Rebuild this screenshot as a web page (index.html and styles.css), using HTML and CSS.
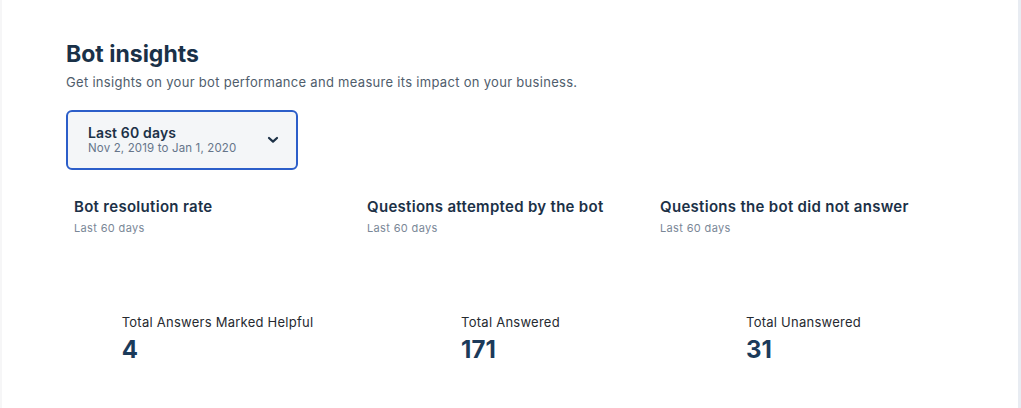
FILE: index.html
```html
<!DOCTYPE html>
<html lang="en">
<head>
<meta charset="utf-8">
<title>Bot insights</title>
<link rel="stylesheet" href="styles.css">
</head>
<body>
<div class="frame">
  <main class="page">
    <header class="header">
      <h1 class="title">Bot insights</h1>
      <p class="subtitle">Get insights on your bot performance and measure its impact on your business.</p>
    </header>
    <button class="range" type="button">
      <span class="range-text">
        <span class="range-label">Last 60 days</span>
        <span class="range-dates">Nov 2, 2019 to Jan 1, 2020</span>
      </span>
      <svg class="chevron" width="12" height="8" viewBox="0 0 12 8" aria-hidden="true"><path d="M2 2l4 3.6L10 2" fill="none" stroke="#1c3147" stroke-width="2.2" stroke-linecap="round" stroke-linejoin="round"/></svg>
    </button>
    <section class="cards">
      <div class="card">
        <h2 class="card-title">Bot resolution rate</h2>
        <p class="card-sub">Last 60 days</p>
      </div>
      <div class="card">
        <h2 class="card-title">Questions attempted by the bot</h2>
        <p class="card-sub">Last 60 days</p>
      </div>
      <div class="card">
        <h2 class="card-title">Questions the bot did not answer</h2>
        <p class="card-sub">Last 60 days</p>
      </div>
    </section>
    <section class="stats">
      <div class="stat-col"><div class="stat"><div class="stat-label">Total Answers Marked Helpful</div><div class="stat-value">4</div></div></div>
      <div class="stat-col"><div class="stat"><div class="stat-label">Total Answered</div><div class="stat-value">171</div></div></div>
      <div class="stat-col"><div class="stat"><div class="stat-label">Total Unanswered</div><div class="stat-value">31</div></div></div>
    </section>
  </main>
  <aside class="rail"></aside>
</div>
</body>
</html>
```

FILE: styles.css
```css
* { box-sizing: border-box; }
html, body { margin: 0; padding: 0; }
body {
  font-family: Inter, "Noto Sans", "Liberation Sans", sans-serif;
  background: #ffffff;
  color: #1c3147;
}
.frame {
  display: flex;
  min-height: 408px;
  border-left: 2px solid #f6f6f7;
}
.page {
  flex: 1;
  padding: 39px 0 0 64px;
}
.rail {
  width: 3px;
  background: #e8ecf2;
}
.title {
  margin: 0;
  font-size: 23px;
  line-height: 30px;
  font-weight: 700;
  color: #1a3148;
}
.subtitle {
  margin: 4px 0 0;
  font-size: 13px;
  line-height: 18px;
  letter-spacing: 0.3px;
  color: #4f5d6c;
}
.range {
  margin-top: 19px;
  width: 232px;
  height: 60px;
  display: flex;
  align-items: center;
  justify-content: space-between;
  padding: 0 17px 0 20px;
  border: 2px solid #2c5ec9;
  border-radius: 6px;
  background: #f4f6f8;
  font-family: inherit;
  text-align: left;
  cursor: pointer;
}
.range-text { display: flex; flex-direction: column; }
.range-label {
  font-size: 14px;
  line-height: 17px;
  font-weight: 600;
  letter-spacing: 0.15px;
  color: #1c3147;
}
.range-dates {
  font-size: 11.5px;
  line-height: 15px;
  letter-spacing: 0.15px;
  color: #66758a;
}
.chevron { display: block; }
.cards {
  display: grid;
  grid-template-columns: repeat(3, 293px);
  margin-top: 27px;
  padding-left: 8px;
}
.card-title {
  margin: 0;
  font-size: 15px;
  line-height: 20px;
  font-weight: 600;
  letter-spacing: 0.3px;
  color: #1c3147;
}
.card-sub {
  margin: 4px 0 0;
  font-size: 11px;
  line-height: 14px;
  letter-spacing: 0.35px;
  color: #7a8797;
}
.stats {
  display: grid;
  grid-template-columns: repeat(3, 293px);
  margin-top: 79px;
  padding-left: 5px;
}
.stat-col { display: flex; justify-content: center; }
.stat-label {
  font-size: 13px;
  line-height: 17px;
  letter-spacing: 0.25px;
  color: #262a30;
}
.stat-value {
  margin-top: 5px;
  font-size: 24px;
  line-height: 28px;
  font-weight: 700;
  color: #1b3a5a;
}
```
